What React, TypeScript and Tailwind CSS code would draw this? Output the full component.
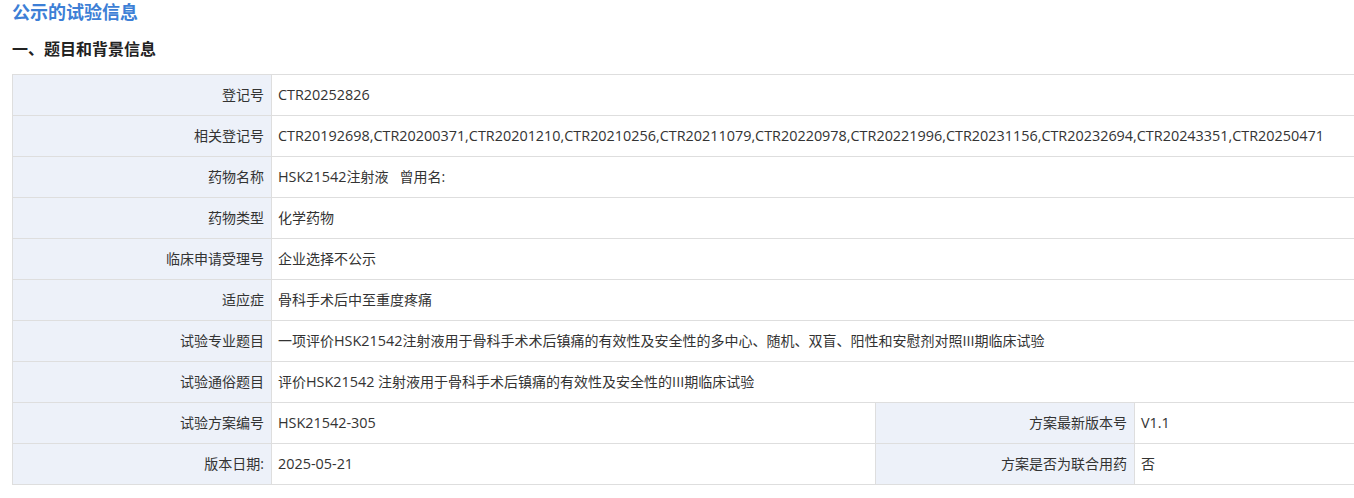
const rows: [string, string][] = [
  ["登记号", "CTR20252826"],
  [
    "相关登记号",
    "CTR20192698,CTR20200371,CTR20201210,CTR20210256,CTR20211079,CTR20220978,CTR20221996,CTR20231156,CTR20232694,CTR20243351,CTR20250471",
  ],
  ["药物名称", "HSK21542注射液\u00a0\u00a0\u00a0曾用名:"],
  ["药物类型", "化学药物"],
  ["临床申请受理号", "企业选择不公示"],
  ["适应症", "骨科手术后中至重度疼痛"],
  [
    "试验专业题目",
    "一项评价HSK21542注射液用于骨科手术术后镇痛的有效性及安全性的多中心、随机、双盲、阳性和安慰剂对照III期临床试验",
  ],
  ["试验通俗题目", "评价HSK21542 注射液用于骨科手术后镇痛的有效性及安全性的III期临床试验"],
];

const splitRows: [string, string, string, string][] = [
  ["试验方案编号", "HSK21542-305", "方案最新版本号", "V1.1"],
  ["版本日期:", "2025-05-21", "方案是否为联合用药", "否"],
];

const label = "h-[41px] border border-[#dedede] bg-[#edf1f9] pr-[7px] text-right align-middle";
const value = "h-[41px] border border-[#dedede] bg-white pl-[6px] text-left align-middle";

// latin runs render a touch wider than the CJK font's metrics
function Mixed({ text }: { text: string }) {
  const parts = text.split(/([A-Za-z0-9.,\-]+)/);
  return (
    <>
      {parts.map((p, i) =>
        /^[A-Za-z0-9.,\-]+$/.test(p) ? (
          <span key={i} className="text-[14.4px]">
            {p}
          </span>
        ) : (
          <span key={i}>{p}</span>
        )
      )}
    </>
  );
}

export default function App() {
  return (
    <div className="h-[498px] w-[1354px] overflow-hidden bg-white font-['Open_Sans','Noto_Sans_CJK_SC',sans-serif] text-[#333]">
      <h1 className="pl-[12px] text-[18px] font-bold leading-[24px] text-[#3d7fd6]">
        公示的试验信息
      </h1>
      <h2 className="mt-[14px] pl-[12px] text-[16px] font-bold leading-[22px] text-[#222]">
        一、题目和背景信息
      </h2>
      <div className="mt-[14px] pl-[12px]">
        <table className="w-[1360px] table-fixed border-collapse text-[14px] leading-[20px]">
          <colgroup>
            <col className="w-[259px]" />
            <col className="w-[604px]" />
            <col className="w-[259px]" />
            <col />
          </colgroup>
          <tbody>
            {rows.map(([k, v]) => (
              <tr key={k}>
                <td className={label}>{k}</td>
                <td className={value + " whitespace-nowrap"} colSpan={3}>
                  <Mixed text={v} />
                </td>
              </tr>
            ))}
            {splitRows.map(([k1, v1, k2, v2]) => (
              <tr key={k1}>
                <td className={label}>{k1}</td>
                <td className={value}>
                  <Mixed text={v1} />
                </td>
                <td className={label}>{k2}</td>
                <td className={value}>
                  <Mixed text={v2} />
                </td>
              </tr>
            ))}
          </tbody>
        </table>
      </div>
    </div>
  );
}
